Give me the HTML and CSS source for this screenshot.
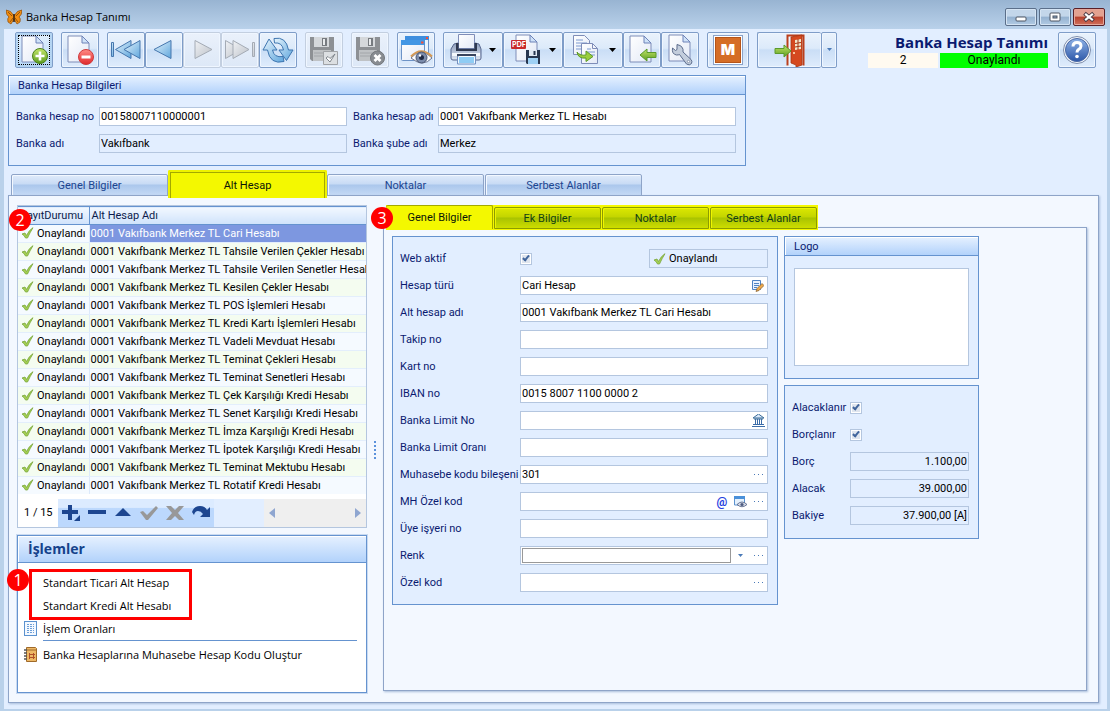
FILE: index.html
```html
<!DOCTYPE html>
<html lang="tr">
<head>
<meta charset="utf-8">
<title>Banka Hesap Tanımı</title>
<link rel="stylesheet" href="styles.css">
</head>
<body>
<svg class="defs" width="0" height="0" aria-hidden="true">
  <defs>
    <linearGradient id="gPage" x1="0" y1="0" x2="1" y2="1"><stop offset="0" stop-color="#ffffff"/><stop offset="1" stop-color="#e3e9f6"/></linearGradient>
    <linearGradient id="gBlue" x1="0" y1="0" x2="1" y2="1"><stop offset="0" stop-color="#e6f4fd"/><stop offset="1" stop-color="#5fa6dc"/></linearGradient>
    <linearGradient id="gGray" x1="0" y1="0" x2="1" y2="1"><stop offset="0" stop-color="#f0f2f5"/><stop offset="1" stop-color="#bcc1c8"/></linearGradient>
    <linearGradient id="gGreen" x1="0" y1="0" x2="0" y2="1"><stop offset="0" stop-color="#c3e66a"/><stop offset="1" stop-color="#5c9c1f"/></linearGradient>
    <linearGradient id="gRed" x1="0" y1="0" x2="0" y2="1"><stop offset="0" stop-color="#ff8c86"/><stop offset="1" stop-color="#e0282c"/></linearGradient>
    <linearGradient id="gHelp" x1="0" y1="0" x2="0" y2="1"><stop offset="0" stop-color="#8fb2e6"/><stop offset="1" stop-color="#2c57a8"/></linearGradient>
    <linearGradient id="gSteel" x1="0" y1="0" x2="0" y2="1"><stop offset="0" stop-color="#8d9dbb"/><stop offset="1" stop-color="#dfe6f2"/></linearGradient>
    <symbol id="page" viewBox="0 0 23 28"><path d="M1 1h14l7 7v19H1z" fill="url(#gPage)" stroke="#7f8db8"/><path d="M15 1v7h7z" fill="#cfe2f8" stroke="#6f83b8" stroke-linejoin="round"/></symbol>
    <symbol id="tick" viewBox="0 0 13 12"><path d="M1 7l3-1 1.500 2.500Q8 3 12 .7 9 5.500 6.500 11H4.500Q3.500 8.500 1 7z" fill="#a3cf52" stroke="#7aa63c" stroke-width=".8" stroke-linejoin="round"/></symbol>
    <symbol id="floppy" viewBox="0 0 24 24"><path d="M0 0h24v24H2l-2-2z" fill="#8d9094"/><path d="M4 0h15v10H4z" fill="#d5d8db"/><path d="M12 1h5v8h-5z" fill="#777b80"/><path d="M13 2h2v6h-2z" fill="#e9ebed"/><path d="M3 13h18v11H3z" fill="#bfc2c5"/><path d="M4 16h14M4 19h14" stroke="#a3a6aa"/></symbol>
    <symbol id="arrowL" viewBox="0 0 18 14"><path d="M1 7L8 1v3.500h9v5H8V13z" fill="url(#gGreen)" stroke="#5b9a2c" stroke-linejoin="round"/></symbol>
    <symbol id="arrowR" viewBox="0 0 18 14"><path d="M17 7L10 1v3.500H1v5h9V13z" fill="url(#gGreen)" stroke="#5b9a2c" stroke-linejoin="round"/></symbol>
  </defs>
</svg>

<header class="titlebar">
  <svg class="app-icon" width="16" height="16" viewBox="0 0 16 16"><path d="M8 7Q5 1 0 1q0 5 3 7-2 1-1 5l3 2 3-5 3 5 3-2q1-4-1-5 3-2 3-7-5 0-8 6z" fill="#f08d12" stroke="#8a4a0a" stroke-width=".7"/><path d="M8 5v8" stroke="#3a2410" stroke-width="1.600"/><path d="M2 3l4 4M14 3l-4 4M4 13l3-4M12 13L9 9" stroke="#7e4308" stroke-width=".8"/></svg>
  <h1 class="title">Banka Hesap Tanımı</h1>
  <div class="win-buttons">
    <button class="win" aria-label="Küçült"><svg width="12" height="12" viewBox="0 0 12 12"><rect x="1" y="6" width="10" height="4" rx="1" fill="#fff" stroke="#4c5563"/></svg></button>
    <button class="win" aria-label="Ekranı kapla"><svg width="12" height="12" viewBox="0 0 12 12"><rect x="1" y="2" width="10" height="8" rx="1" fill="#fff" stroke="#4c5563"/><rect x="4" y="5" width="4" height="2" fill="#8ba9c8" stroke="#4c5563"/></svg></button>
    <button class="win win-close" aria-label="Kapat"><svg width="14" height="12" viewBox="0 0 14 12"><path d="M4 3.500l6 5M10 3.500l-6 5" stroke="#4b3a44" stroke-width="4" stroke-linecap="square"/><path d="M4 3.500l6 5M10 3.500l-6 5" stroke="#fff" stroke-width="2.200" stroke-linecap="square"/></svg></button>
  </div>
</header>

<main class="client">
  <div class="toolbar">
    <button class="tool tool-focus" aria-label="Yeni"><svg width="36" height="34" viewBox="1 1 36 34"><use href="#page" x="6" y="3" width="23" height="28"/><circle cx="25" cy="24" r="7.500" fill="url(#gGreen)" stroke="#4b821c"/><path d="M25 19.500v9M20.500 24h9" stroke="#fff" stroke-width="2.600"/></svg></button>
    <button class="tool" aria-label="Sil"><svg width="36" height="34" viewBox="1 1 36 34"><use href="#page" x="6" y="3" width="23" height="28"/><circle cx="25" cy="25" r="7.500" fill="url(#gRed)" stroke="#cf3a3c"/><path d="M20.500 25h9" stroke="#fff" stroke-width="3"/></svg></button>
    <div class="tool-group">
      <button class="tool" aria-label="İlk"><svg width="36" height="34" viewBox="1 1 36 34"><g fill="url(#gBlue)" stroke="#4677ae" stroke-linejoin="round"><path d="M4.500 10.500h2v14h-2z"/><path d="M8.500 17.500L24 8.500v18z"/><path d="M17 17.500l16-9v18z"/></g></svg></button>
      <button class="tool" aria-label="Önceki"><svg width="36" height="34" viewBox="1 1 36 34"><path d="M9 17.500l17-9v18z" fill="url(#gBlue)" stroke="#4677ae" stroke-linejoin="round"/></svg></button>
      <button class="tool tool-off" aria-label="Sonraki"><svg width="36" height="34" viewBox="1 1 36 34"><path d="M29 17.500l-17-9v18z" fill="url(#gGray)" stroke="#a4abb5" stroke-linejoin="round"/></svg></button>
      <button class="tool tool-off" aria-label="Son"><svg width="36" height="34" viewBox="1 1 36 34"><g fill="url(#gGray)" stroke="#a4abb5" stroke-linejoin="round"><path d="M20.500 17.500l-16-9v18z"/><path d="M28 17.500l-16-9v18z"/><path d="M31.500 10.500h2v14h-2z"/></g></svg></button>
      <button class="tool" aria-label="Yenile"><svg width="36" height="34" viewBox="1 1 36 34"><g fill="url(#gBlue)" stroke="#3f76b0" stroke-linejoin="round"><path d="M15 6.500Q27 4 29.500 18H34l-6.500 10.500L20 18h4.500Q23 10 15.500 11z"/><path d="M25 29.500Q11 33 8.500 18H4L10 7l8 11h-4.500Q15 26 24 24.500z"/></g></svg></button>
    </div>
    <button class="tool tool-off" aria-label="Kaydet ve onayla"><svg width="36" height="34" viewBox="1 1 36 34"><use href="#floppy" x="5" y="5" width="24" height="24"/><path d="M18.500 19.500h14v13h-14z" fill="#dcdfe2" stroke="#a0a3a7"/><path d="M21 26l4 4 5-8-5 4.500-2-2z" fill="#fff" stroke="#7f858c"/></svg></button>
    <button class="tool tool-off" aria-label="Kaydet ve kapat"><svg width="36" height="34" viewBox="1 1 36 34"><use href="#floppy" x="5" y="5" width="24" height="24"/><circle cx="26.500" cy="26" r="7" fill="#888c91" stroke="#74787d"/><path d="M23.500 23l6 6M29.500 23l-6 6" stroke="#fff" stroke-width="2.800"/></svg></button>
    <button class="tool" aria-label="Önizleme"><svg width="36" height="34" viewBox="1 1 36 34"><rect x="8.500" y="4.500" width="23" height="18" rx="1" fill="#eaf4fe" stroke="#6d93c7"/><path d="M8 4h24v4H8z" fill="#3e8ede"/><rect x="4.500" y="8.500" width="23" height="20" rx="1" fill="url(#gPage)" stroke="#6d93c7"/><path d="M4 8h24v5H4z" fill="#4497e4"/><path d="M24 9.500h2.500v2H24zM29 5h2v2h-2z" fill="#f4503a"/><path d="M14 26q10-12 21 0-9 10-21 0z" fill="#fff" stroke="#69738f"/><path d="M14 24.500q10-10.500 21 0" fill="none" stroke="#d59a55" stroke-width="2"/><circle cx="24.500" cy="25.500" r="5.500" fill="#7c8cab" stroke="#46536f"/><circle cx="24.500" cy="25.500" r="2.500" fill="#1f2a44"/><circle cx="23" cy="23.500" r="1.200" fill="#fff"/></svg></button>
    <div class="tool-group">
      <button class="tool tool-menu" aria-label="Yazdır"><svg width="58" height="34" viewBox="1 1 58 34"><path d="M15.500 2.500h16v14h-16z" fill="url(#gPage)" stroke="#7f8db8"/><path d="M11 12l4-1v6h17v-6l4 1 2 5v9q0 2-2 2H10q-2 0-2-2v-9z" fill="url(#gSteel)" stroke="#56668e"/><path d="M13 11h2.500v6h16v-6H34v8H13z" fill="#2e3850"/><path d="M9 21h28v3H9z" fill="#f4f7fc"/><path d="M14 22h19v3H14z" fill="#39445e"/><path d="M15.500 24.500h16v7h-16z" fill="#8fccf4" stroke="#f2f8ff"/><path d="M14.500 24v8h18v-8" fill="none" stroke="#7390c0"/><path d="M46 16h7l-3.500 4z" fill="#000"/></svg></button>
      <button class="tool tool-menu" aria-label="PDF kaydet"><svg width="58" height="34" viewBox="1 1 58 34"><use href="#page" x="12" y="2" width="23" height="28"/><rect x="8" y="8" width="15" height="9" rx="1" fill="#c92c2c"/><text class="pdf-text" x="9" y="15">PDF</text><path d="M23 18h14v14H24l-1-1z" fill="#27364f"/><path d="M26 18h8v6h-8z" fill="#dfe8f3"/><path d="M30.500 19h2v4h-2z" fill="#27364f"/><path d="M25 26h10v6H25z" fill="#9ed0f4"/><path d="M46 16h7l-3.500 4z" fill="#000"/></svg></button>
      <button class="tool tool-menu" aria-label="Kopyala"><svg width="58" height="34" viewBox="1 1 58 34"><path d="M10.500 3.500h11l5 5v14h-16z" fill="url(#gPage)" stroke="#7f8db8"/><path d="M13 8h7M13 11h11M13 14h9M13 17h9" stroke="#7d9ad0"/><path d="M18.500 11.500h11l5 5v15h-16z" fill="url(#gPage)" stroke="#7f8db8"/><path d="M29.500 11.500v5h5" fill="none" stroke="#7f8db8"/><path d="M24 17h4M24 20h8M26 23h6" stroke="#7d9ad0"/><path d="M14 20q3 4 9 3v-4l7 5.500-7 5V26q-8 1-9-6z" fill="#9ace3c" stroke="#5d9a26" stroke-linejoin="round"/><path d="M46 16h7l-3.500 4z" fill="#000"/></svg></button>
      <button class="tool" aria-label="Al"><svg width="36" height="34" viewBox="1 1 36 34"><use href="#page" x="6" y="3" width="23" height="28"/><use href="#arrowL" x="16" y="16" width="18" height="14"/></svg></button>
      <button class="tool" aria-label="Araçlar"><svg width="36" height="34" viewBox="1 1 36 34"><use href="#page" x="7" y="2" width="23" height="28"/><path d="M16 12.500v5l-1.500 1-3-2.500q-1 6 4 7 2 0 3-.5l7 9.500q3 2 5-.5 1-2-.5-4L22 20q1-6-6-7.500z" fill="#c3cddc" stroke="#5c6c8c" stroke-linejoin="round"/><circle cx="27.500" cy="29.500" r="1.200" fill="#fff" stroke="#5c6c8c" stroke-width=".6"/></svg></button>
    </div>
    <button class="tool tool-wide" aria-label="M"><svg width="40" height="34" viewBox="1 1 40 34"><rect x="6.500" y="3.500" width="29" height="29" fill="#fff" stroke="#8ba2c8"/><rect x="8.500" y="5.500" width="25" height="25" fill="#d56d26" stroke="#b65418"/><text class="m-text" x="21" y="23" text-anchor="middle">M</text></svg></button>
    <div class="tool-group">
      <button class="tool tool-exit" aria-label="Çıkış"><svg width="62" height="34" viewBox="1 1 62 34"><path d="M29.500 33.500v-30h16v30" fill="#eef4fc" stroke="#bb3f1c" stroke-width="2"/><path d="M33 5l11-2v30l-6 2V33l-5-2z" fill="#d5491f" stroke="#a83612" stroke-width=".8"/><path d="M37 8l6-1v10l-6 1z" fill="#f2e7cc"/><path d="M40 7v11M37 11.500l6-1M37 15l6-1" stroke="#a83612"/><circle cx="36" cy="21" r="1" fill="#fff0c8"/><use href="#arrowR" x="16" y="12" width="18" height="14"/></svg></button>
      <button class="tool tool-thin" aria-label="Çıkış seçenekleri"><svg width="7" height="4" viewBox="0 0 7 4"><path d="M1 0h5L3.500 3z" fill="#4a7ab8"/></svg></button>
    </div>
    <div class="record">
      <h2 class="record-title">Banka Hesap Tanımı</h2>
      <div class="record-row"><span class="record-no">2</span><span class="record-state">Onaylandı</span></div>
    </div>
    <button class="tool tool-help" aria-label="Yardım"><svg width="36" height="34" viewBox="1 1 36 34"><circle cx="19" cy="18" r="13.500" fill="#f4f7fc" stroke="#7e8eac"/><circle cx="19" cy="18" r="11.500" fill="url(#gHelp)" stroke="#4a69a6"/><path d="M15 14.500q0-4 4-4t4 3.500q0 2-2.500 3.500-1.500 1-1.500 3" fill="none" stroke="#fff" stroke-width="3"/><circle cx="19" cy="24.500" r="1.800" fill="#fff"/></svg></button>
  </div>

  <section class="box account">
    <h3 class="box-head">Banka Hesap Bilgileri</h3>
    <div class="account-grid">
      <label for="hno">Banka hesap no</label><input class="field" id="hno" value="00158007110000001">
      <label for="had">Banka hesap adı</label><input class="field" id="had" value="0001 Vakıfbank Merkez TL Hesabı">
      <label for="bad">Banka adı</label><input class="field field-ro" id="bad" value="Vakıfbank" readonly>
      <label for="sad">Banka şube adı</label><input class="field field-ro" id="sad" value="Merkez" readonly>
    </div>
  </section>

  <nav class="tabs">
    <button class="tab">Genel Bilgiler</button>
    <button class="tab tab-active">Alt Hesap</button>
    <button class="tab">Noktalar</button>
    <button class="tab">Serbest Alanlar</button>
  </nav>

  <div class="panel">
    <aside class="side">
      <span class="badge badge-2">2</span>
      <div class="list">
        <table class="grid">
          <thead><tr><th class="col-state">KayıtDurumu</th><th>Alt Hesap Adı</th></tr></thead>
          <tbody>
            <tr class="selected"><td><svg class="ok"><use href="#tick"/></svg>Onaylandı</td><td>0001 Vakıfbank Merkez TL Cari Hesabı</td></tr>
            <tr><td><svg class="ok"><use href="#tick"/></svg>Onaylandı</td><td>0001 Vakıfbank Merkez TL Tahsile Verilen Çekler Hesabı</td></tr>
            <tr><td><svg class="ok"><use href="#tick"/></svg>Onaylandı</td><td>0001 Vakıfbank Merkez TL Tahsile Verilen Senetler Hesabı</td></tr>
            <tr><td><svg class="ok"><use href="#tick"/></svg>Onaylandı</td><td>0001 Vakıfbank Merkez TL Kesilen Çekler Hesabı</td></tr>
            <tr><td><svg class="ok"><use href="#tick"/></svg>Onaylandı</td><td>0001 Vakıfbank Merkez TL POS İşlemleri Hesabı</td></tr>
            <tr><td><svg class="ok"><use href="#tick"/></svg>Onaylandı</td><td>0001 Vakıfbank Merkez TL Kredi Kartı İşlemleri Hesabı</td></tr>
            <tr><td><svg class="ok"><use href="#tick"/></svg>Onaylandı</td><td>0001 Vakıfbank Merkez TL Vadeli Mevduat Hesabı</td></tr>
            <tr><td><svg class="ok"><use href="#tick"/></svg>Onaylandı</td><td>0001 Vakıfbank Merkez TL Teminat Çekleri Hesabı</td></tr>
            <tr><td><svg class="ok"><use href="#tick"/></svg>Onaylandı</td><td>0001 Vakıfbank Merkez TL Teminat Senetleri Hesabı</td></tr>
            <tr><td><svg class="ok"><use href="#tick"/></svg>Onaylandı</td><td>0001 Vakıfbank Merkez TL Çek Karşılığı Kredi Hesabı</td></tr>
            <tr><td><svg class="ok"><use href="#tick"/></svg>Onaylandı</td><td>0001 Vakıfbank Merkez TL Senet Karşılığı Kredi Hesabı</td></tr>
            <tr><td><svg class="ok"><use href="#tick"/></svg>Onaylandı</td><td>0001 Vakıfbank Merkez TL İmza Karşılığı Kredi Hesabı</td></tr>
            <tr><td><svg class="ok"><use href="#tick"/></svg>Onaylandı</td><td>0001 Vakıfbank Merkez TL İpotek Karşılığı Kredi Hesabı</td></tr>
            <tr><td><svg class="ok"><use href="#tick"/></svg>Onaylandı</td><td>0001 Vakıfbank Merkez TL Teminat Mektubu Hesabı</td></tr>
            <tr><td><svg class="ok"><use href="#tick"/></svg>Onaylandı</td><td>0001 Vakıfbank Merkez TL Rotatif Kredi Hesabı</td></tr>
          </tbody>
        </table>
        <div class="pager">
          <span class="pager-count">1 / 15</span>
          <div class="pager-tools">
            <button class="pg" aria-label="Ekle"><svg width="20" height="18" viewBox="0 0 20 18"><path d="M7 1h4v5h6v4h-6v6H7v-6H1V6h6z" fill="#1d4690"/><path d="M19 11v6h-6z" fill="#1d4690"/></svg></button>
            <button class="pg" aria-label="Sil"><svg width="20" height="18" viewBox="0 0 20 18"><path d="M1 6h18v4H1z" fill="#1d4690"/></svg></button>
            <button class="pg" aria-label="Düzenle"><svg width="20" height="18" viewBox="0 0 20 18"><path d="M10 4l8 8H2z" fill="#1d4690"/></svg></button>
            <button class="pg" aria-label="Onayla"><svg width="20" height="18" viewBox="0 0 20 18"><path d="M1 8l3-1 4 4 9-9 2 2-10 12H7z" fill="#989898"/></svg></button>
            <button class="pg" aria-label="Vazgeç"><svg width="20" height="18" viewBox="0 0 20 18"><path d="M1 2h5l4 4 4-4h5l-6 7 6 7h-5l-4-4-4 4H1l6-7z" fill="#989898"/></svg></button>
            <button class="pg" aria-label="Yenile"><svg width="20" height="18" viewBox="0 0 20 18"><path d="M1 8q2-6 8-6 5 0 7 4l3-3v10H9l3-3q-2-3-5-3-3 0-4 4z" fill="#1d4690"/></svg></button>
          </div>
          <div class="pager-scroll">
            <svg width="6" height="10" viewBox="0 0 6 10"><path d="M6 0v10L0 5z" fill="#8fa6d0"/></svg>
            <svg width="6" height="10" viewBox="0 0 6 10"><path d="M0 0v10l6-5z" fill="#8fa6d0"/></svg>
          </div>
        </div>
      </div>

      <section class="actions">
        <span class="badge badge-1">1</span>
        <span class="mark"></span>
        <h3 class="actions-head">İşlemler</h3>
        <ul class="actions-list">
          <li><a href="#ticari">Standart Ticari Alt Hesap</a></li>
          <li><a href="#kredi">Standart Kredi Alt Hesabı</a></li>
          <li><a href="#oran"><svg width="13" height="15" viewBox="0 0 13 15"><rect x=".5" y=".5" width="12" height="14" fill="#f4f9ff" stroke="#5b92cf"/><path d="M3 3.500h7M3 5.500h7M3 7.500h7M3 9.500h7M3 11.500h7" stroke="#6d9fd8" stroke-dasharray="2 1"/></svg>İşlem Oranları</a></li>
          <li class="split"><a href="#muhasebe"><svg width="13" height="15" viewBox="0 0 13 15"><path d="M2.500.5h9l1 1v13h-10z" fill="#edb866" stroke="#a06a2a"/><path d="M3 3h9" stroke="#a06a2a"/><path d="M0 3h3M0 6h3M0 9h3M0 12h3" stroke="#555" stroke-width="1.500"/><path d="M5.500 6v6M9.500 6v6M5 7.500h6M5 10.500h6" stroke="#b0502a"/></svg>Banka Hesaplarına Muhasebe Hesap Kodu Oluştur</a></li>
        </ul>
      </section>
    </aside>

    <div class="splitter"><span class="grip"></span></div>

    <div class="detail">
      <span class="badge badge-3">3</span>
      <nav class="tabs tabs-inner">
        <button class="tab tab-active">Genel Bilgiler</button>
        <button class="tab">Ek Bilgiler</button>
        <button class="tab">Noktalar</button>
        <button class="tab">Serbest Alanlar</button>
      </nav>
      <div class="panel-inner">
        <form class="box form">
          <label for="web">Web aktif</label>
          <div class="web-row"><input type="checkbox" id="web" checked><span class="state"><svg class="ok"><use href="#tick"/></svg>Onaylandı</span></div>
          <label for="tur">Hesap türü</label>
          <div class="combo"><input id="tur" value="Cari Hesap"><button type="button" class="ic" aria-label="Seç"><svg width="12" height="12" viewBox="0 0 12 12"><path d="M.5.500h8v9h-8z" fill="#eaf3ff" stroke="#4f83c4"/><path d="M2 3.500h5M2 5.500h5M2 7.500h3" stroke="#4f83c4"/><path d="M4 11.500l1-3L10 3.500l2 2-5 5z" fill="#eda84a" stroke="#7d5a2c" stroke-width=".7"/></svg></button></div>
          <label for="ahad">Alt hesap adı</label><input class="field" id="ahad" value="0001 Vakıfbank Merkez TL Cari Hesabı">
          <label for="takip">Takip no</label><input class="field" id="takip">
          <label for="kart">Kart no</label><input class="field" id="kart">
          <label for="iban">IBAN no</label><input class="field" id="iban" value="0015 8007 1100 0000 2">
          <label for="limit">Banka Limit No</label>
          <div class="combo"><input id="limit"><button type="button" class="ic" aria-label="Banka"><svg width="13" height="13" viewBox="0 0 13 13"><path d="M6.500 0L1 4h11zM2 5h9" fill="#dbe9fa" stroke="#3b6c98"/><path d="M3.500 5v6M5.500 5v6M7.500 5v6M9.500 5v6M1 10.500h11M0 12.500h13" stroke="#3b6ca8"/></svg></button></div>
          <label for="oran">Banka Limit Oranı</label><input class="field" id="oran">
          <label for="mkb">Muhasebe kodu bileşeni</label>
          <div class="combo"><input id="mkb" value="301"><button type="button" class="ic dots" aria-label="Seç"></button></div>
          <label for="mhk">MH Özel kod</label>
          <div class="combo"><input id="mhk"><button type="button" class="ic at">@</button><button type="button" class="ic" aria-label="Görüntüle"><svg width="13" height="12" viewBox="0 0 13 12"><path d="M.5 1h10v8H.500z" fill="#e4f0fc" stroke="#5b92cf"/><path d="M0 0h11v3H0z" fill="#4a90d9"/><path d="M3 8.500q5-5 10 0-5 4.500-10 0z" fill="#d5dae6" stroke="#4e5c80" stroke-width=".8"/><circle cx="8" cy="8.500" r="1.600" fill="#4e5c80"/></svg></button><button type="button" class="ic dots" aria-label="Seç"></button></div>
          <label for="uye">Üye işyeri no</label><input class="field" id="uye">
          <label for="renk">Renk</label>
          <div class="combo"><input id="renk" class="color"><button type="button" class="ic" aria-label="Aç"><svg width="7" height="4" viewBox="0 0 7 4"><path d="M1 0h5L3.500 3z" fill="#4a7ab8"/></svg></button><button type="button" class="ic dots" aria-label="Seç"></button></div>
          <label for="ozel">Özel kod</label>
          <div class="combo"><input id="ozel"><button type="button" class="ic dots" aria-label="Seç"></button></div>
        </form>

        <div class="column">
          <section class="box">
            <h3 class="box-head">Logo</h3>
            <div class="logo-frame"></div>
          </section>
          <form class="box totals">
            <label for="alc">Alacaklanır</label><input type="checkbox" id="alc" checked>
            <label for="brc">Borçlanır</label><input type="checkbox" id="brc" checked>
            <label for="borc">Borç</label><input class="field field-ro num" id="borc" value="1.100,00" readonly>
            <label for="alacak">Alacak</label><input class="field field-ro num" id="alacak" value="39.000,00" readonly>
            <label for="bakiye">Bakiye</label><input class="field field-ro num" id="bakiye" value="37.900,00 [A]" readonly>
          </form>
        </div>
      </div>
    </div>
  </div>
</main>
</body>
</html>
```
FILE: styles.css
```css
:root {
  --ui: Roboto, "DejaVu Sans", sans-serif;
  --caption: "Open Sans", "Noto Sans", sans-serif;
  --line: #6593cf;
  --field-line: #b4c6df;
  --edge: #8ea4c8;
  --ink: #0a1a70;
  --face: #e2eeff;
}

* { box-sizing: border-box; }

body {
  margin: 0;
  min-height: 100vh;
  display: flex;
  flex-direction: column;
  padding: 0 3px 2px 4px;
  background: #b9d1ea linear-gradient(#98b4d2, #b9d1ea) 0 0 / 100% 29px no-repeat;
  font: 11px/16px var(--ui);
  color: #000;
}

button, input { font: inherit; color: inherit; margin: 0; padding: 0; }
button { background: none; border: 0; }
h1, h2, h3, ul { margin: 0; padding: 0; font: inherit; }
svg { display: block; flex: none; }
.defs { position: absolute; }
label { color: var(--ink); white-space: nowrap; }

.titlebar { display: flex; align-items: center; height: 29px; padding: 5px 2px 0; gap: 4px; }
.title { font: 11px/16px var(--caption); }
.win-buttons { display: flex; gap: 2px; margin-left: auto; }
.win {
  display: flex; align-items: center; justify-content: center;
  width: 32px; height: 18px;
  border: 1px solid #5b6f8a; border-radius: 2px;
  background: linear-gradient(#c3d6ea 45%, #94b1d0 50%, #b2cbe4);
  box-shadow: inset 0 0 0 1px #d5e4f3;
}
.win-close {
  border-color: #5a2028;
  background: linear-gradient(#e3a190 45%, #b8402c 50%, #d0705c);
  box-shadow: inset 0 0 0 1px #e6a699;
}

.client { flex: 1; display: flex; flex-direction: column; background: var(--face); padding: 3px 8px 6px 4px; }

.toolbar { display: flex; gap: 8px; padding: 0 3px 0 7px; }
.tool-group { display: flex; }
.tool {
  display: flex; align-items: center; justify-content: center;
  width: 38px; height: 36px;
  border: 1px solid #7f9dc8; border-radius: 2px;
  background: linear-gradient(#eaf2fc 0%, #dceafa 45%, #cadef6 50%, #dfecfc 100%);
  box-shadow: inset 0 0 0 1px #eff6ff;
}
.tool-focus { background: linear-gradient(#e2effc, #b8d8f8); box-shadow: inset 0 0 0 2px #b4d4f2; outline: 1px dotted #000; outline-offset: -4px; }
.tool-off { border-color: #c3cfe0; background: linear-gradient(#eaf1fb, #dde8f7); }
.tool-menu { width: 60px; }
.tool-wide { width: 42px; }
.tool-exit { width: 64px; border-right: 0; }
.tool-thin { width: 16px; }
.pdf-text { font: 900 7px Lato, sans-serif; fill: #fff; }
.m-text { font: 900 15px Inter, sans-serif; fill: #fff; }

.record { margin-left: auto; width: 180px; color: #000; }
.record-title { font: 700 15px/20px var(--caption); color: #0a1a70; text-align: right; white-space: nowrap; }
.record-row { display: flex; gap: 2px; line-height: 15px; text-align: center; margin-top: 1px; font-size: 12px; }
.record-no { width: 70px; background: #fffaf0; }
.record-state { flex: 1; background: #00ff00; }
.tool-help { margin-left: 2px; }

.box { border: 1px solid var(--line); background: var(--face); }
.box-head {
  height: 19px; padding: 0 9px; line-height: 19px; color: var(--ink);
  background: linear-gradient(#e6f1ff, #b2d2fb);
  border-bottom: 1px solid var(--line);
  box-shadow: inset 1px 1px 0 #fff;
}
.account { max-width: 738px; width: 100%; margin-top: 7px; }
.account-grid {
  display: grid; align-items: center;
  grid-template-columns: 77px 248px 79px 1fr;
  gap: 8px 6px; padding: 12px 9px 12px 7px;
}
.field, .combo, .state { height: 19px; border: 1px solid var(--field-line); background: #fff; min-width: 0; }
.field { width: 100%; padding: 0 1px; }
.field-ro, .state { background: var(--face); }
.num { text-align: right; }

.tabs { display: flex; align-items: flex-end; gap: 1px; margin-top: 4px; padding-left: 3px; height: 26px; margin-bottom: -1px; }
.tab {
  width: 157px; height: 22px; padding-top: 2px;
  border: 1px solid var(--edge); border-radius: 2px 2px 0 0;
  background: linear-gradient(#e0ebfa, #c8dbf5 45%, #abc7ec 50%, #c4d9f5);
  box-shadow: inset 1px 1px 0 #f3f8ff;
  color: #1c4590;
}
.tabs .tab-active {
  width: 159px; height: 28px; z-index: 1; margin: 0 -1px -2px; padding: 1px 0 0;
  background: #f4f800; border: 2px solid #eef200; border-bottom: 0;
  box-shadow: inset 1px 1px 0 #a3a800, inset -1px 0 0 #a3a800;
  color: #0a1408;
}

.panel {
  flex: 1; display: flex;
  border: 1px solid var(--edge); background: #f3f8ff;
  box-shadow: 1px 1px 2px #a9bddb;
  padding: 9px 11px 9px 8px;
}

.side { position: relative; width: 350px; flex: none; display: flex; flex-direction: column; gap: 7px; }
.list { border: 1px solid var(--field-line); background: #fff; }
.grid { width: 100%; table-layout: fixed; border-collapse: collapse; border-bottom: 5px solid #fff; }
.grid th {
  height: 18px; padding: 0 2px; font-weight: 400; text-align: left; line-height: 17px;
  background: linear-gradient(#f2f8ff, #cfe2fb); border: 1px solid var(--line); border-width: 1px 0 1px 1px;
  color: #0c1c4c;
}
.grid .col-state { width: 71px; padding: 0 0 0 2px; border-left: 0; }
.grid td { height: 18px; padding: 0 1px; line-height: 17px; white-space: nowrap; overflow: hidden; border-bottom: 1px solid #e3eefc; background: #f5faff; }
.grid td + td { border-left: 1px solid #dce9fa; }
.grid td:first-child { padding-left: 3px; }
.grid tr:nth-child(even) td { background: #f4fcf0; }
.grid .selected td + td { background: #7d97e0; color: #fff; }
.ok { display: inline-block; width: 13px; height: 12px; margin-right: 3px; vertical-align: -2px; }

.pager { display: flex; align-items: stretch; height: 28px; background: var(--face); }
.pager-count { width: 40px; background: #fff; padding-left: 6px; line-height: 28px; white-space: nowrap; }
.pager-tools { display: flex; gap: 6px; padding: 0 3px; align-items: center; background: linear-gradient(#dcebff 30%, #bcd8fd 34%, #bcd8fd); }
.pager-scroll { margin-left: auto; width: 102px; padding: 0 5px; display: flex; align-items: center; justify-content: space-between; background: #efefef; }

.actions { position: relative; flex: 1; border: 1px solid var(--line); box-shadow: 0 0 0 1px #c9daf1; background: #fff; font: 11px/23px var(--caption); min-height: 150px; }
.actions-head {
  height: 27px; padding: 0 10px; font: 700 14px/26px var(--caption); color: #15428b;
  background: linear-gradient(#e6f1ff, #b2d2fb); border-bottom: 1px solid var(--line);
  box-shadow: inset 1px 1px 0 #fff;
}
.actions-list { list-style: none; padding: 8px 9px 0 25px; }
.actions-list a { position: relative; color: #000; text-decoration: none; white-space: nowrap; }
.actions-list a svg { position: absolute; left: -19px; top: 0; }
.actions-list .split { padding-top: 2px; border-top: 1px solid var(--line); }
.mark { position: absolute; left: 11px; top: 33px; width: 163px; height: 51px; border: 3px solid #f00; }
.badge {
  position: absolute; z-index: 3; width: 22px; height: 22px; border-radius: 50%;
  background: #f00; color: #fff; font: 16px/22px var(--caption); text-align: center;
}
.badge-1 { left: -11px; top: 33px; }
.badge-2 { left: -8px; top: 4px; }
.badge-3 { left: -12px; top: 2px; }

.splitter { width: 16px; display: flex; align-items: center; justify-content: center; }
.grip { width: 4px; height: 19px; background: radial-gradient(circle, #5b92dc 1px, transparent 1px) 0 0 / 4px 4px; }

.detail { position: relative; flex: 1; min-width: 0; display: flex; flex-direction: column; margin-bottom: 2px; }
.tabs-inner {
  align-self: flex-start; height: 25px; margin: 0 0 -3px 3px; padding: 0 1px 1px 0; gap: 1px;
  background: #f4f800; z-index: 1;
}
.tabs-inner .tab {
  width: 107px; height: 22px; color: #123f14; border-color: #8d9c00;
  background: linear-gradient(#dce800, #c3d500 45%, #a9c300 50%, #cddd00);
  box-shadow: inset 1px 1px 0 #eef500;
}
.tabs-inner .tab-active { height: 24px; margin: 0; padding: 1px 0 0; background: #f4f800; color: #0a1408; border: 0; box-shadow: inset 0 1px 0 #a3a800, inset -1px 0 0 #a3a800; }
.panel-inner {
  flex: 1; display: flex; align-items: flex-start; gap: 6px;
  border: 1px solid var(--edge); box-shadow: 1px 1px 2px #a9bddb; background: #f3f8ff;
  padding: 8px;
}
.form {
  flex: 0 1 386px; min-width: 0; display: grid; align-items: center;
  grid-template-columns: 114px minmax(0, 1fr); gap: 8px 6px;
  padding: 12px 9px 12px 7px;
}
.web-row { display: flex; align-items: center; justify-content: space-between; }
.state { width: 119px; display: flex; align-items: center; padding-left: 3px; }
.combo { display: flex; align-items: center; }
.combo input { flex: 1; min-width: 0; height: 17px; border: 0; padding: 0 1px; background: none; }
.combo .color { height: 15px; margin-left: 1px; border: 1px solid #999; }
.ic { display: flex; align-items: center; justify-content: center; width: 18px; height: 17px; flex: none; }
.at { color: #1f3ee0; font-weight: 700; font-size: 12px; }
.dots::before { content: ""; width: 9px; height: 1px; background: repeating-linear-gradient(90deg, #4a7ab8 0 1px, transparent 1px 4px); }

input[type="checkbox"] {
  appearance: none; width: 12px; height: 12px; border: 1px solid var(--field-line);
  background: #dfe5ee; box-shadow: inset 0 0 0 1px #fff; position: relative;
}
input[type="checkbox"]:checked::after {
  content: ""; position: absolute; left: 3px; top: 0; width: 3px; height: 6px; box-sizing: content-box;
  width: 2px; height: 5px;
  border: solid #41659c; border-width: 0 2px 2px 0; transform: rotate(40deg);
}

.column { flex: 0 1 195px; display: flex; flex-direction: column; gap: 6px; }
.logo-frame { height: 98px; margin: 12px 9px; border: 1px solid var(--field-line); background: #fff; }
.totals { display: grid; grid-template-columns: 52px minmax(0, 1fr); grid-auto-rows: 19px; align-items: center; gap: 8px 6px; padding: 12px 9px 13px 7px; }
```
